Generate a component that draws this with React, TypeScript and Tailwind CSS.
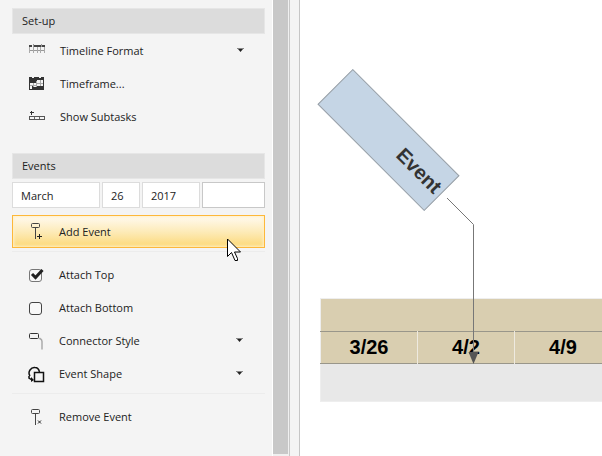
import { useState } from "react";
import type { ReactNode } from "react";

const weeks = ["3/26", "4/2", "4/9"];

function TimelineFormatIcon() {
  return (
    <svg width="18" height="18" viewBox="0 0 18 18" shapeRendering="crispEdges">
      <path d="M0 2h3v2h-3zM5 2h7v2h-7zM13 2h3v2h-3z" fill="#444" />
      <path d="M4.5 1v3M12.5 1v3" stroke="#999" />
      <path d="M0 7.5h16" stroke="#999" />
      <path d="M0.5 4v6M4.5 4v6M8.5 4v6M11.5 4v6M15.5 4v6" stroke="#aaa" />
    </svg>
  );
}

function TimeframeIcon() {
  return (
    <svg width="18" height="18" viewBox="0 0 18 18" shapeRendering="crispEdges">
      <path d="M0 1h3v1h2v-1h5v1h2v-1h3v13h-15z" fill="#333" />
      <path
        d="M8 4h3v3h-3zM12 4h2v3h-2zM1 7h3v2h-3zM5 7h2v2h-2zM8 8h3v2h-3zM12 8h2v2h-2zM1 10h2v3h-2zM4 10h3v1h-3z"
        fill="#f4f4f4"
      />
      <path d="M7 7.5h7M11.5 4v6M1 9.5h6M4.5 7v4M7.5 5v6" stroke="#aaa" />
    </svg>
  );
}

function SubtasksIcon() {
  return (
    <svg width="18" height="18" viewBox="0 0 18 18" shapeRendering="crispEdges">
      <path d="M2.5 2v4M1 3.5h4" stroke="#333" />
      <path d="M0.5 7.5h15v3h-15z" fill="#f4f4f4" stroke="#555" />
      <path d="M5.5 8v2M10.5 8v2" stroke="#666" />
    </svg>
  );
}

function EventIcon({ mark }: { mark: "plus" | "cross" }) {
  return (
    <svg width="18" height="18" viewBox="0 0 18 18" fill="none" stroke="#444">
      <rect x="3.5" y="0.5" width="8" height="4" rx="1" />
      <path d="M7.5 5v11" />
      {mark === "plus" ? (
        <path d="M11.5 11v5M9 13.5h5" stroke="#222" />
      ) : (
        <path d="M10 11.5l3 3M13 11.5l-3 3" stroke="#222" />
      )}
    </svg>
  );
}

function ConnectorIcon() {
  return (
    <svg width="18" height="18" viewBox="0 0 18 18" fill="none">
      <path d="M11 5.5h1q2 1 2 3v8" stroke="#aaa" strokeWidth="1.5" />
      <rect x="1.5" y="0.5" width="9" height="5" rx="1" stroke="#333" />
    </svg>
  );
}

function ShapeIcon() {
  return (
    <svg width="18" height="18" viewBox="0 0 18 18" fill="none" stroke="#111">
      <path d="M2 10q-2-3 0-6 2-3 5-2.5 3.500 0 4.500 4.500" strokeWidth="1.5" />
      <path d="M1 10v2l3 2" strokeWidth="1.5" />
      <path d="M3 11l3 3-3 2z" fill="#111" stroke="none" />
      <rect x="6.5" y="6.5" width="9" height="9" strokeWidth="1.5" fill="#f4f4f4" />
    </svg>
  );
}

function Caret() {
  return (
    <svg className="mr-[21px] mb-1" width="7" height="4" viewBox="0 0 7 4">
      <path d="M0 0h7v1h-7z" fill="#888" />
      <path d="M1 1h5l-2.5 3z" fill="#222" />
    </svg>
  );
}

function SectionTitle({ children }: { children: ReactNode }) {
  return (
    <h2 className="flex h-[26px] items-center border border-[#e6e6e6] bg-[#dcdcdc] px-[9px] pt-px">
      {children}
    </h2>
  );
}

function MenuButton({ icon, label, menu }: { icon: ReactNode; label: string; menu?: boolean }) {
  return (
    <button type="button" className="flex h-[33px] w-full items-center text-left">
      <span className="flex w-[31px] shrink-0">{icon}</span>
      <span className="flex-1">{label}</span>
      {menu && <Caret />}
    </button>
  );
}

type CheckRowProps = {
  label: string;
  checked: boolean;
  onChange: (checked: boolean) => void;
};

function CheckRow({ label, checked, onChange }: CheckRowProps) {
  return (
    <label className="flex h-[33px] items-center">
      <span className="relative flex w-[31px] shrink-0 pl-[1px]">
        <input
          type="checkbox"
          checked={checked}
          onChange={(e) => onChange(e.target.checked)}
          className="size-[13px] appearance-none rounded-[3px] border border-[#444] bg-[#f8f8f8] checked:border-[#777]"
        />
        {checked && (
          <svg className="pointer-events-none absolute top-0 left-[1px]" width="15" height="13" viewBox="0 0 15 13">
            <path d="M3 5l3.5 3.5 7-7.5" fill="none" stroke="#222" strokeWidth="3" />
          </svg>
        )}
      </span>
      <span>{label}</span>
    </label>
  );
}

export default function App() {
  const [attachTop, setAttachTop] = useState(true);
  const [attachBottom, setAttachBottom] = useState(false);

  return (
    <div className="relative flex min-h-screen overflow-hidden bg-white font-['Open_Sans','Noto_Sans',sans-serif] text-[11px] text-[#222]">
      <aside className="flex w-[300px] shrink-0 border-r border-[#c6c6c6] bg-[#f4f4f4]">
        <div className="min-w-0 flex-1 pt-2 pr-[7px] pl-3">
          <section>
            <SectionTitle>Set-up</SectionTitle>
            <div className="pt-px pl-[17px]">
              <MenuButton icon={<TimelineFormatIcon />} label="Timeline Format" menu />
              <MenuButton icon={<TimeframeIcon />} label="Timeframe..." />
              <MenuButton icon={<SubtasksIcon />} label="Show Subtasks" />
            </div>
          </section>

          <section className="mt-[19px]">
            <SectionTitle>Events</SectionTitle>
            <div className="mt-[3px] flex gap-[2px]">
              <input aria-label="Month" defaultValue="March" className="h-[26px] w-[88px] border border-[#dcdcdc] bg-white px-2" />
              <input aria-label="Day" defaultValue="26" className="h-[26px] w-[38px] border border-[#dcdcdc] bg-white px-2" />
              <input aria-label="Year" defaultValue="2017" className="h-[26px] w-[58px] border border-[#dcdcdc] bg-white px-2" />
              <input aria-label="Time" className="h-[26px] min-w-0 flex-1 border border-[#c8c8c8] bg-white px-2" />
            </div>
            <button
              type="button"
              className="mt-[7px] flex h-[33px] w-full items-center border border-[#fdb83a] bg-linear-to-b from-[#fffaf0] via-[#fdebb9] to-[#fcd874] pt-px pl-[15px] text-left shadow-[inset_0_0_3px_1px_#fff0c8]"
            >
              <span className="flex w-[31px] shrink-0">
                <EventIcon mark="plus" />
              </span>
              <span>Add Event</span>
            </button>
            <hr className="mt-[3px] mb-[7px] border-[#ececec]" />
            <div className="pr-px pl-4">
              <CheckRow label="Attach Top" checked={attachTop} onChange={setAttachTop} />
              <CheckRow label="Attach Bottom" checked={attachBottom} onChange={setAttachBottom} />
              <MenuButton icon={<ConnectorIcon />} label="Connector Style" menu />
              <MenuButton icon={<ShapeIcon />} label="Event Shape" menu />
            </div>
            <hr className="mt-[2px] mb-[7px] border-[#ececec]" />
            <div className="pl-4">
              <MenuButton icon={<EventIcon mark="cross" />} label="Remove Event" />
            </div>
          </section>
        </div>
        <div className="flex w-[18px] shrink-0 border-r border-l border-r-[#c8c8c8] border-l-white bg-[#f0f0f0] pb-[2px]">
          <div className="w-[15px] bg-[#c8c8c8]" />
        </div>
        <div className="w-[9px] shrink-0" />
      </aside>

      <main className="relative min-w-0 flex-1 overflow-hidden pt-[298px] pl-5 font-['Liberation_Sans',Arial,sans-serif]">
        <table className="w-full min-w-[292px] table-fixed border-collapse border border-[#eeeeee] text-[20px] leading-6 font-bold text-black">
          <colgroup>
            <col className="w-[97px]" />
            <col className="w-[97px]" />
            <col className="w-[97px]" />
            <col />
          </colgroup>
          <thead>
            <tr className="h-[33px] bg-[#d9ceb0]">
              <td colSpan={4} />
            </tr>
            <tr className="h-8 border-y border-[#99968a] bg-[#d9ceb0]">
              {weeks.map((week) => (
                <th key={week} scope="col" className="border-r border-r-[#eeeae0] p-0 pb-[2px]">
                  {week}
                </th>
              ))}
              <td />
            </tr>
          </thead>
          <tbody>
            <tr className="h-[38px] bg-[#e8e8e8]">
              <td colSpan={4} />
            </tr>
          </tbody>
        </table>

        {/* event shape and its connector to the timeline */}
        <div className="absolute top-[115px] left-[13px] flex h-[50px] w-[151px] rotate-45 items-center justify-end border border-[#9aa0a6] bg-[#c5d5e5] pr-1 text-[20px] font-bold text-[#333]">
          Event
        </div>
        <svg className="absolute top-[198px] left-[146px]" width="34" height="166" viewBox="0 0 34 166">
          <path d="M1 0l26.5 26.5v130" fill="none" stroke="#777" />
          <path d="M22.5 154h10l-5 12z" fill="#555" />
        </svg>
      </main>

      <svg className="pointer-events-none absolute top-[238px] left-[227px]" width="15" height="24" viewBox="0 0 15 24">
        <path d="M0.5 1v17.5l4-4 3.5 8h2.5v-2l-3-6.500h6z" fill="#fff" stroke="#000" />
      </svg>
    </div>
  );
}
